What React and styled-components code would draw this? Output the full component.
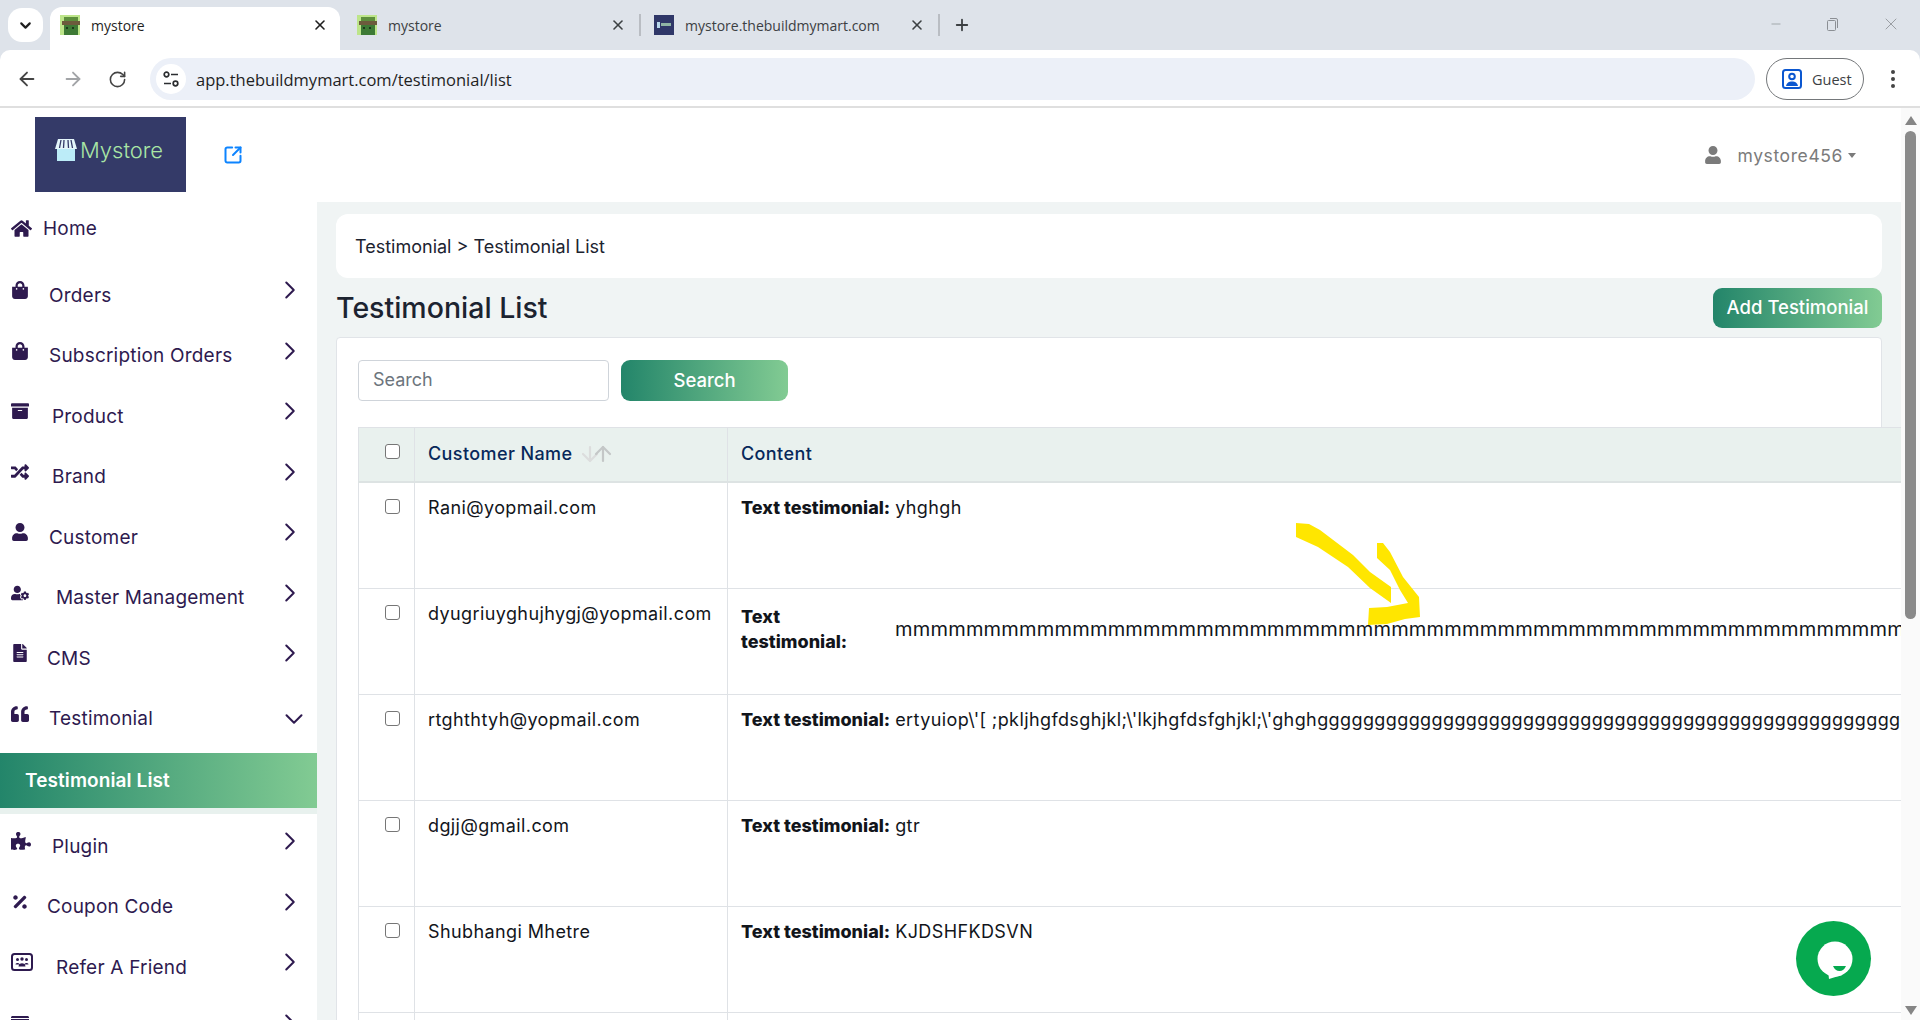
import React from 'react';
import styled, { createGlobalStyle } from 'styled-components';
import {
  ArrowDown, ArrowLeft, ArrowRight, ArrowUp, ChevronDown, ChevronRight, Minus, Plus,
  RotateCw, SquareArrowOutUpRight, X,
} from 'lucide-react';
import {
  FaArchive, FaFileAlt, FaHome, FaPercentage, FaPuzzlePiece, FaQuoteLeft, FaRandom,
  FaShoppingBag, FaUser, FaUserCog, FaIdCard,
} from 'react-icons/fa';

const FONT = "Inter, 'Noto Sans', sans-serif";
const CHROME_FONT = "'Open Sans', 'Noto Sans', sans-serif";
const GRADIENT = 'linear-gradient(90deg, #23856a 0%, #82cb93 100%)';

const GlobalStyle = createGlobalStyle`
  html, body { margin: 0; padding: 0; height: 100%; overflow: hidden; background: #fff; }
  * { box-sizing: border-box; }
  body { font-family: ${FONT}; }
`;

const Screen = styled.div`
  width: 1920px;
  height: 1020px;
  display: flex;
  flex-direction: column;
  overflow: hidden;
  position: relative;
`;

/* browser frame */
const TabStrip = styled.div`
  height: 50px;
  flex: none;
  background: #dee3ea;
  display: flex;
  align-items: flex-end;
  padding-left: 8px;
  font-family: ${CHROME_FONT};
  color: #3c4043;
`;

const TabMenu = styled.div`
  width: 35px;
  height: 34px;
  margin: 0 7px 8px 0;
  background: #fff;
  border-radius: 14px;
  display: flex;
  align-items: center;
  justify-content: center;
`;

const Tab = styled.div`
  width: ${(p) => p.$width}px;
  height: 43px;
  flex: none;
  padding: 0 12px 7px ${(p) => p.$left || 10}px;
  display: flex;
  align-items: center;
  font-size: 14px;
  border-radius: 12px 12px 0 0;
  background: ${(p) => (p.$active ? '#fff' : 'transparent')};
  color: ${(p) => (p.$active ? '#1f1f1f' : '#3c4043')};
`;

const TabTitle = styled.span`
  margin-left: 11px;
  flex: 1;
  white-space: nowrap;
`;

const TabDivider = styled.div`
  width: 2px;
  height: 22px;
  margin: 0 0 14px 1px;
  background: #b9bdc3;
  flex: none;
`;

const NewTab = styled.div`
  margin: 0 0 16px 13px;
  display: flex;
`;

const WindowControls = styled.div`
  margin-left: auto;
  display: flex;
  align-items: center;
  gap: 42px;
  padding: 0 19px 2px 0;
  height: 100%;
  color: #8b8f94;
`;

const Toolbar = styled.div`
  height: 58px;
  flex: none;
  background: #dee3ea;
  font-family: ${CHROME_FONT};
`;

const ToolbarInner = styled.div`
  height: 100%;
  background: #fff;
  border-radius: 10px 10px 0 0;
  border-bottom: 2px solid #dfdfdf;
  display: flex;
  align-items: center;
  padding: 2px 25px 0 16px;
`;

const NavButtons = styled.div`
  display: flex;
  align-items: center;
  gap: 24px;
  width: 134px;
  flex: none;
`;

const Omnibox = styled.div`
  flex: 1;
  height: 42px;
  border-radius: 21px;
  background: #ecf0f8;
  display: flex;
  align-items: center;
  padding-left: 6px;
  font-size: 16.5px;
  color: #1f1f1f;
`;

const TuneBadge = styled.div`
  width: 30px;
  height: 30px;
  border-radius: 50%;
  background: #fff;
  display: flex;
  align-items: center;
  justify-content: center;
  margin-right: 10px;
`;

const GuestPill = styled.div`
  width: 98px;
  height: 42px;
  margin-left: 11px;
  border: 1.5px solid #74777a;
  border-radius: 21px;
  display: flex;
  align-items: center;
  padding-left: 15px;
  gap: 10px;
  font-size: 14.5px;
  color: #3c4043;
`;

const Kebab = styled.div`
  margin-left: 27px;
  display: flex;
  flex-direction: column;
  gap: 3px;

  i {
    width: 4px;
    height: 4px;
    border-radius: 50%;
    background: #444;
  }
`;

const Viewport = styled.div`
  flex: 1;
  display: flex;
  min-height: 0;
`;

const Page = styled.div`
  flex: 1;
  min-width: 0;
  display: flex;
  flex-direction: column;
`;

/* scrollbar of the window */
const ScrollTrack = styled.div`
  width: 19px;
  flex: none;
  background: #fafafa;
  display: flex;
  flex-direction: column;
  align-items: center;
  padding: 8px 0 5px;
  color: #858585;
`;

const ScrollThumb = styled.div`
  width: 11px;
  height: 488px;
  margin-top: 6px;
  border-radius: 6px;
  background: #8a8a8a;
`;

const ScrollArrow = styled.div`
  width: 0;
  height: 0;
  border-left: 6px solid transparent;
  border-right: 6px solid transparent;
  ${(p) => (p.$down ? 'border-top: 9px solid #858585; margin-top: auto;' : 'border-bottom: 9px solid #858585;')}
`;

/* site header */
const Header = styled.header`
  height: 94px;
  flex: none;
  display: flex;
  align-items: center;
  padding: 0 45px 0 35px;
  background: #fff;
`;

const Logo = styled.div`
  width: 151px;
  height: 75px;
  margin-top: -2px;
  background: #343a68;
  display: flex;
  align-items: center;
  justify-content: center;
  gap: 2px;
  padding: 0 4px 8px 0;
  color: #a9e6a5;
  font-size: 22px;
  font-weight: 300;
`;

const ExternalLink = styled.div`
  margin: 0 0 0 37px;
  display: flex;
  color: #0d84ff;
`;

const UserMenu = styled.div`
  margin-left: auto;
  display: flex;
  align-items: center;
  color: #7b7b7b;
  font-size: 17.5px;
  letter-spacing: 0.6px;
`;

const UserName = styled.span`
  margin-left: 16px;
`;

const Caret = styled.span`
  margin-left: 5px;
  width: 0;
  height: 0;
  border-left: 4.5px solid transparent;
  border-right: 4.5px solid transparent;
  border-top: 5px solid #7b7b7b;
`;

const Body = styled.div`
  flex: 1;
  display: flex;
  min-height: 0;
`;

/* sidebar */
const Sidebar = styled.nav`
  width: 317px;
  flex: none;
  background: #fff;
  overflow: hidden;
  color: #2e1a4f;
  font-size: 19px;
`;

const NavRow = styled.div`
  height: ${(p) => (p.$home ? 52 : 60.5)}px;
  margin-bottom: ${(p) => (p.$home ? 11 : 0)}px;
  padding: 0 12px 0 11px;
  display: flex;
  align-items: center;
  white-space: nowrap;
  letter-spacing: 0.2px;
`;

const NavIcon = styled.span`
  width: ${(p) => p.$slot}px;
  flex: none;
  display: flex;
  padding-bottom: ${(p) => (p.$home ? 0 : 10)}px;

  svg {
    width: auto;
    height: ${(p) => p.$size || 18}px;
  }
`;

const NavChevron = styled.span`
  margin-left: auto;
  display: flex;
  padding-bottom: ${(p) => (p.$open ? 0 : 10)}px;
  margin-right: ${(p) => (p.$open ? -4 : 0)}px;
`;

const SubItem = styled.div`
  height: 61px;
  margin-top: 4px;
  margin-bottom: 2px;
  padding-left: 25px;
  display: flex;
  align-items: center;
  background: ${GRADIENT};
  background-clip: padding-box;
  border-bottom: 6px solid #e8f1ee;
  color: #fff;
  font-weight: 600;
  font-size: 19px;
  letter-spacing: 0.1px;
`;

/* main column */
const Main = styled.main`
  flex: 1;
  min-width: 0;
  overflow: hidden;
  background: #f0f4f4;
  padding: 12px 19px 0;
`;

const Breadcrumb = styled.div`
  height: 64px;
  padding-left: 19px;
  display: flex;
  align-items: center;
  background: #fff;
  border-radius: 12px;
  font-size: 18px;
  color: #1c2330;
`;

const TitleRow = styled.div`
  height: 40px;
  margin: 10px 0 9px;
  display: flex;
  align-items: center;
  justify-content: space-between;
`;

const Title = styled.h1`
  margin: 0 0 2px;
  font-size: 28.5px;
  font-weight: 500;
  color: #1c2330;
`;

const GreenButton = styled.button`
  height: ${(p) => p.$h}px;
  width: ${(p) => p.$w}px;
  border: 0;
  border-radius: 9px;
  background: ${GRADIENT};
  color: #fff;
  font-family: ${FONT};
  font-size: 18.5px;
  font-weight: 500;
  padding: 0 0 2px;
`;

const Card = styled.section`
  background: #fff;
  border: 1px solid #e1e4e8;
  border-radius: 4px 4px 0 0;
  padding: 22px 21px 0;
  height: 800px;
`;

const SearchBar = styled.div`
  display: flex;
  gap: 12px;
  margin-bottom: 26px;
`;

const SearchInput = styled.input`
  width: 251px;
  height: 41px;
  border: 1px solid #cfd4da;
  border-radius: 4px;
  padding: 0 14px 2px;
  font-family: ${FONT};
  font-size: 18px;
  outline: none;

  &::placeholder {
    color: #6c757d;
    opacity: 1;
  }
`;

const Table = styled.table`
  width: 1800px;
  table-layout: fixed;
  border-collapse: collapse;
  font-size: 18px;
  letter-spacing: 0.4px;
  color: #12151b;
`;

const HeadRow = styled.tr`
  height: 54px;
  background: #e9f1ee;
  border-bottom: 2px solid #dde3e3;
`;

const HeadCell = styled.th`
  width: ${(p) => p.$w || 'auto'};
  border: 1px solid #dfe2e6;
  border-bottom: 0;
  padding: 0 0 0 13px;
  text-align: left;
  font-weight: 500;
  color: #07285a;
  white-space: nowrap;
`;

const HeadInner = styled.div`
  display: flex;
  align-items: center;
  padding-bottom: 1px;
`;

const SortArrows = styled.span`
  display: flex;
  margin-left: 6px;

  svg + svg {
    margin-left: -11px;
  }
`;

const BodyRow = styled.tr`
  height: 106px;
  background: #fff;

  &:first-child {
    height: 107px;
  }
`;

const Cell = styled.td`
  border: 1px solid #dfe2e6;
  vertical-align: top;
  padding: 14px 0 0 13px;
  line-height: 22px;
  white-space: nowrap;
  overflow: hidden;
`;

const CheckCell = styled(Cell)`
  padding: 16px 0 0 26px;
`;

const HeadCheckCell = styled(HeadCell)`
  padding: 0 0 5px 26px;
`;

const Check = styled.input.attrs({ type: 'checkbox' })`
  appearance: none;
  width: 15px;
  height: 15px;
  margin: 0;
  display: block;
  background: #fff;
  border: 1.5px solid #767676;
  border-radius: 3px;
`;

const Testimonial = styled.div`
  display: flex;
  align-items: ${(p) => (p.$wrapped ? 'center' : 'flex-start')};
  margin-top: ${(p) => (p.$wrapped ? 1 : 0)}px;
  gap: 5px;
`;

const Label = styled.strong`
  font-weight: 800;
  font-size: 18px;
  letter-spacing: 0;
  flex: none;
  ${(p) =>
    p.$wrapped
      ? 'width: 149px; padding-right: 36px; white-space: normal; line-height: 25px;'
      : ''}
`;

const Value = styled.span`
  ${(p) => (p.$wide ? 'font-size: 20px; letter-spacing: 0.2px;' : '')}
`;

const Overlay = styled.svg`
  position: absolute;
  left: 1290px;
  top: 520px;
  pointer-events: none;
`;

const ChatBubble = styled.div`
  position: absolute;
  left: 1796px;
  top: 921px;
  width: 75px;
  height: 75px;
  border-radius: 50%;
  background: #06a94f;
  display: flex;
  align-items: center;
  justify-content: center;
`;

const StoreFavicon = () => (
  <svg width="20" height="20" viewBox="0 0 10 10" shapeRendering="crispEdges">
    <rect width="10" height="10" fill="#bde58a" />
    <rect x="2" y="1" width="7" height="2" fill="#5d8f3d" />
    <rect x="1" y="3" width="9" height="2" fill="#6c5b3c" />
    <rect x="2" y="5" width="7" height="5" fill="#3d7a35" />
    <rect x="3" y="6" width="1" height="1" fill="#1d3a1c" />
    <rect x="6" y="6" width="1" height="1" fill="#1d3a1c" />
  </svg>
);

const NavyFavicon = () => (
  <svg width="20" height="20" viewBox="0 0 20 20">
    <rect width="20" height="20" fill="#2f3768" />
    <rect x="3" y="7" width="3" height="6" fill="#b8d8ec" />
    <rect x="7" y="8" width="10" height="3" fill="#8fb4a4" />
  </svg>
);

const TuneIcon = () => (
  <svg width="18" height="18" viewBox="0 0 18 18" fill="none" stroke="#2b2d30" strokeWidth="1.7">
    <circle cx="4.5" cy="4.5" r="2.3" />
    <path d="M9 4.5h7M2 13.5h7" />
    <circle cx="13.5" cy="13.5" r="2.3" />
  </svg>
);

const GuestIcon = () => (
  <svg width="20" height="20" viewBox="0 0 20 20">
    <rect x="1" y="1" width="18" height="18" rx="2.5" fill="#fff" stroke="#0b57d0" strokeWidth="2" />
    <circle cx="10" cy="7.5" r="2.8" fill="none" stroke="#0b57d0" strokeWidth="2" />
    <path d="M4 17c.6-3.4 3-4.6 6-4.6s5.4 1.2 6 4.6z" fill="#0b57d0" />
  </svg>
);

const RestoreIcon = () => (
  <svg width="14" height="14" viewBox="0 0 14 14" fill="none" stroke="#8b8f94">
    <rect x="2.5" y="3.5" width="8" height="10" rx="1" />
    <path d="M5 1.5h6a1.5 1.5 0 0 1 1.5 1.5v8" />
  </svg>
);

const StoreIcon = () => (
  <svg width="24" height="24" viewBox="0 0 24 24">
    <path d="M4 1h16l3 10H1z" fill="#e4f6fb" />
    <path d="M7 2 5.5 10M10 2l-.5 8M14 2l.5 8M17 2l1.5 8" stroke="#343a68" strokeWidth="1.3" />
    <rect x="3" y="11" width="18" height="12" fill="#bcecf8" />
  </svg>
);

const ReferIcon = () => (
  <svg width="22" height="18" viewBox="0 0 22 18">
    <rect x="1" y="1" width="20" height="16" rx="2.5" fill="none" stroke="#2e1a4f" strokeWidth="2" />
    <circle cx="6.5" cy="6.5" r="1.5" fill="#2e1a4f" />
    <circle cx="11" cy="6" r="1.7" fill="#2e1a4f" />
    <circle cx="15.5" cy="6.5" r="1.5" fill="#2e1a4f" />
    <path d="M4.5 11.500c0-2 4-2 4 0zM13.500 11.500c0-2 4-2 4 0zM7.500 13.500c0-4.500 7-4.500 7 0z" fill="#2e1a4f" />
  </svg>
);

const NAV_TOP = [
  { label: 'Orders', icon: <FaShoppingBag />, slot: 38 },
  { label: 'Subscription Orders', icon: <FaShoppingBag />, slot: 38 },
  { label: 'Product', icon: <FaArchive />, slot: 41 },
  { label: 'Brand', icon: <FaRandom />, slot: 41 },
  { label: 'Customer', icon: <FaUser />, slot: 38 },
  { label: 'Master Management', icon: <FaUserCog />, slot: 45 },
  { label: 'CMS', icon: <FaFileAlt />, slot: 36 },
];

const NAV_BOTTOM = [
  { label: 'Plugin', icon: <FaPuzzlePiece />, slot: 41, size: 20 },
  { label: 'Coupon Code', icon: <FaPercentage />, slot: 36 },
  { label: 'Refer A Friend', icon: <ReferIcon />, slot: 45 },
  { label: '', icon: <FaIdCard />, slot: 45 },
];

const ROWS = [
  { name: 'Rani@yopmail.com', text: 'yhghgh' },
  { name: 'dyugriuyghujhygj@yopmail.com', text: 'm'.repeat(70), wrapped: true },
  {
    name: 'rtghthtyh@yopmail.com',
    text: "ertyuiop\\'[ ;pkljhgfdsghjkl;\\'lkjhgfdsfghjkl;\\'ghgh" + 'g'.repeat(100),
  },
  { name: 'dgjj@gmail.com', text: 'gtr' },
  { name: 'Shubhangi Mhetre', text: 'KJDSHFKDSVN' },
  { name: '', text: '' },
];

const NavEntry = ({ item }) => (
  <NavRow>
    <NavIcon $slot={item.slot} $size={item.size}>
      {item.icon}
    </NavIcon>
    {item.label}
    <NavChevron>
      <ChevronRight size={30} strokeWidth={1.6} />
    </NavChevron>
  </NavRow>
);

export default function App() {
  return (
    <Screen>
      <GlobalStyle />
      <TabStrip>
        <TabMenu>
          <ChevronDown size={17} strokeWidth={3} color="#1f1f1f" />
        </TabMenu>
        <Tab $active $width={290}>
          <StoreFavicon />
          <TabTitle>mystore</TabTitle>
          <X size={16} strokeWidth={2.4} color="#1f1f1f" />
        </Tab>
        <Tab $width={298} $left={17}>
          <StoreFavicon />
          <TabTitle>mystore</TabTitle>
          <X size={16} strokeWidth={2.4} />
        </Tab>
        <TabDivider />
        <Tab $width={296} $left={13}>
          <NavyFavicon />
          <TabTitle>mystore.thebuildmymart.com</TabTitle>
          <X size={16} strokeWidth={2.4} />
        </Tab>
        <TabDivider />
        <NewTab>
          <Plus size={18} strokeWidth={2.4} />
        </NewTab>
        <WindowControls>
          <Minus size={14} strokeWidth={1.2} />
          <RestoreIcon />
          <X size={20} strokeWidth={1} />
        </WindowControls>
      </TabStrip>

      <Toolbar>
        <ToolbarInner>
          <NavButtons>
            <ArrowLeft size={22} strokeWidth={2} color="#444" />
            <ArrowRight size={22} strokeWidth={2} color="#a2a4a7" />
            <RotateCw size={19} strokeWidth={2} color="#444" />
          </NavButtons>
          <Omnibox>
            <TuneBadge>
              <TuneIcon />
            </TuneBadge>
            app.thebuildmymart.com/testimonial/list
          </Omnibox>
          <GuestPill>
            <GuestIcon />
            Guest
          </GuestPill>
          <Kebab>
            <i />
            <i />
            <i />
          </Kebab>
        </ToolbarInner>
      </Toolbar>

      <Viewport>
        <Page>
          <Header>
            <Logo>
              <StoreIcon />
              Mystore
            </Logo>
            <ExternalLink>
              <SquareArrowOutUpRight size={20} strokeWidth={2.4} />
            </ExternalLink>
            <UserMenu>
              <FaUser size={18} />
              <UserName>mystore456</UserName>
              <Caret />
            </UserMenu>
          </Header>

          <Body>
            <Sidebar>
              <NavRow $home>
                <NavIcon $home $slot={32} $size={21}>
                  <FaHome />
                </NavIcon>
                Home
              </NavRow>
              {NAV_TOP.map((item) => (
                <NavEntry key={item.label} item={item} />
              ))}
              <NavRow>
                <NavIcon $slot={38}>
                  <FaQuoteLeft />
                </NavIcon>
                Testimonial
                <NavChevron $open>
                  <ChevronDown size={30} strokeWidth={1.6} />
                </NavChevron>
              </NavRow>
              <SubItem>Testimonial List</SubItem>
              {NAV_BOTTOM.map((item) => (
                <NavEntry key={item.label || 'more'} item={item} />
              ))}
            </Sidebar>

            <Main>
              <Breadcrumb>Testimonial &gt; Testimonial List</Breadcrumb>
              <TitleRow>
                <Title>Testimonial List</Title>
                <GreenButton $w={169} $h={40}>
                  Add Testimonial
                </GreenButton>
              </TitleRow>
              <Card>
                <SearchBar>
                  <SearchInput placeholder="Search" />
                  <GreenButton $w={167} $h={41}>
                    Search
                  </GreenButton>
                </SearchBar>
                <Table>
                  <thead>
                    <HeadRow>
                      <HeadCheckCell $w="56px">
                        <Check readOnly />
                      </HeadCheckCell>
                      <HeadCell $w="313px">
                        <HeadInner>
                          Customer Name
                          <SortArrows>
                            <ArrowDown size={24} strokeWidth={2.2} color="#dcdddd" />
                            <ArrowUp size={24} strokeWidth={2.2} color="#c4c7c7" />
                          </SortArrows>
                        </HeadInner>
                      </HeadCell>
                      <HeadCell>
                        <HeadInner>Content</HeadInner>
                      </HeadCell>
                    </HeadRow>
                  </thead>
                  <tbody>
                    {ROWS.map((row, i) => (
                      <BodyRow key={i}>
                        <CheckCell>{row.name && <Check readOnly />}</CheckCell>
                        <Cell>{row.name}</Cell>
                        <Cell>
                          {row.text && (
                            <Testimonial $wrapped={row.wrapped}>
                              <Label $wrapped={row.wrapped}>Text testimonial:</Label>
                              <Value $wide={row.wrapped}>{row.text}</Value>
                            </Testimonial>
                          )}
                        </Cell>
                      </BodyRow>
                    ))}
                  </tbody>
                </Table>
              </Card>
            </Main>
          </Body>
        </Page>

        <ScrollTrack>
          <ScrollArrow />
          <ScrollThumb />
          <ScrollArrow $down />
        </ScrollTrack>
      </Viewport>

      <Overlay width="140" height="110" viewBox="1290 520 140 110">
        <path
          d="M1296 523 1309 524 1320 530 1353 555 1370 572 1391 587 1391 603 1370 588 1348 567 1318 547 1296 537z"
          fill="#ffe600"
        />
        <path
          d="M1377 543 1383 543 1390 552 1403 577 1419 597 1420 617 1405 619 1387 624 1368 625 1369 608 1387 607 1408 603 1400 590 1390 570 1377 558z"
          fill="#ffe600"
        />
      </Overlay>

      <ChatBubble>
        <svg width="44" height="46" viewBox="0 0 44 46">
          <circle cx="23" cy="23" r="17.5" fill="#fff" />
          <path d="M16 34 17 43 30 39z" fill="#fff" />
          <path d="M21 30h13c-1.5 3.4-3.5 5-6.5 5s-5-1.6-6.5-5z" fill="#06a94f" />
        </svg>
      </ChatBubble>
    </Screen>
  );
}
